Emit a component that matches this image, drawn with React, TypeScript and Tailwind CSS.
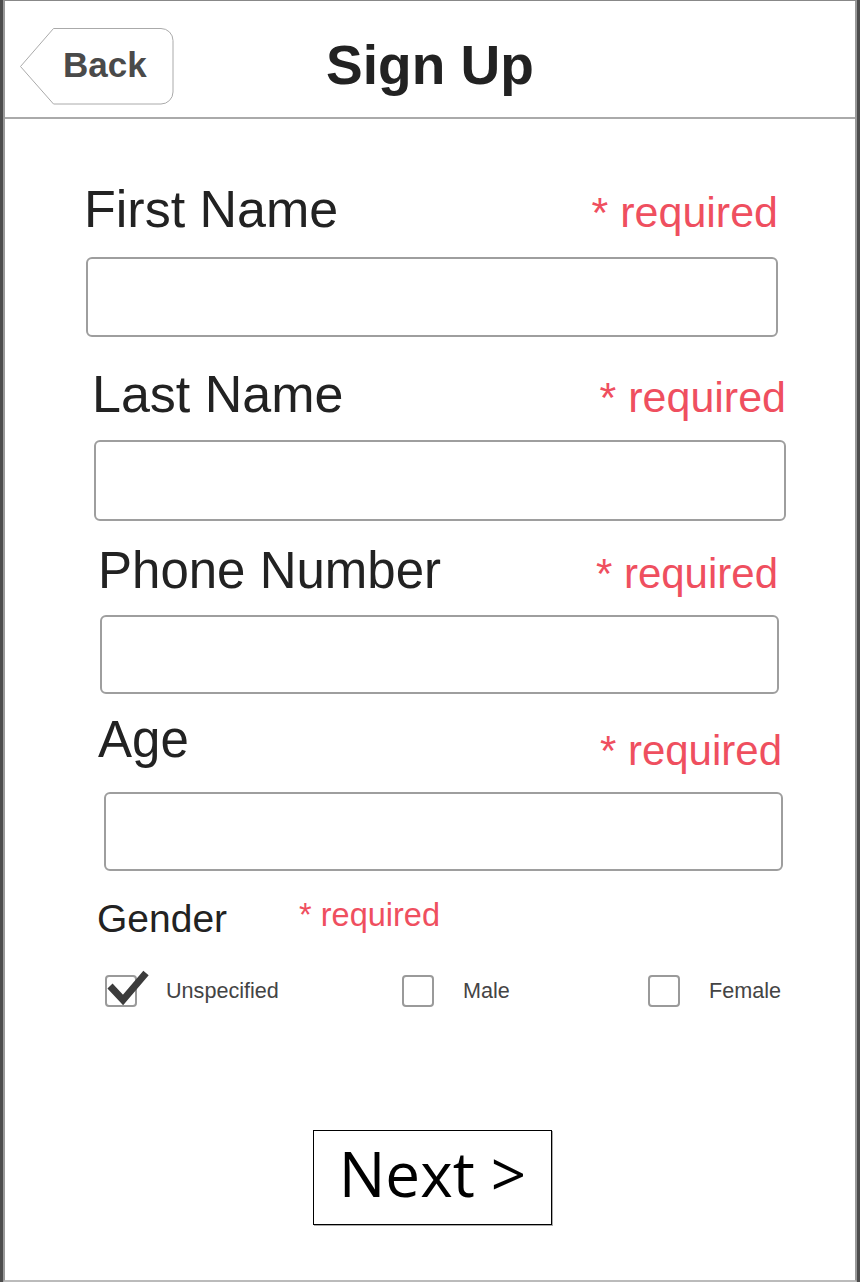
import React from "react";

const sans = { fontFamily: '"Liberation Sans", Arial, sans-serif' };

interface Field {
  label: string;
  labelSize: string;
  reqSize: string;
  rowClass: string;
  reqClass: string;
  inputClass: string;
}

const fields: Field[] = [
  {
    label: "First Name",
    labelSize: "text-[52px]",
    reqSize: "text-[43px]",
    rowClass: "mt-[64px] ml-[79px] mr-[77px]",
    reqClass: "",
    inputClass: "mt-[22px] ml-[81px] w-[692px] h-[80px]",
  },
  {
    label: "Last Name",
    labelSize: "text-[52px]",
    reqSize: "text-[43px]",
    rowClass: "mt-[31px] ml-[87px] mr-[69px]",
    reqClass: "",
    inputClass: "mt-[20px] ml-[89px] w-[692px] h-[81px]",
  },
  {
    label: "Phone Number",
    labelSize: "text-[51px]",
    reqSize: "text-[42px]",
    rowClass: "mt-[24px] ml-[93px] mr-[77px]",
    reqClass: "",
    inputClass: "mt-[19px] ml-[95px] w-[679px] h-[79px]",
  },
  {
    label: "Age",
    labelSize: "text-[51px]",
    reqSize: "text-[42px]",
    rowClass: "mt-[20px] ml-[93px] mr-[73px]",
    reqClass: "translate-y-[8px]",
    inputClass: "mt-[27px] ml-[99px] w-[679px] h-[79px]",
  },
];

function BackButton() {
  return (
    <div className="relative w-[154px] h-[77px] ml-[15px] mt-[27px]">
      <svg className="absolute inset-0" width="154" height="77" viewBox="0 0 154 77">
        <path
          d="M33.5 0.5 H141 a12 12 0 0 1 12 12 V64 a12 12 0 0 1 -12 12 H33.5 L0.5 38.5 Z"
          fill="white"
          stroke="#aaaaaa"
          strokeWidth="1"
        />
      </svg>
      <div
        className="relative pl-[43px] pt-[19px] text-[35px] leading-none font-bold text-[#4a4a4a]"
        style={sans}
      >
        Back
      </div>
    </div>
  );
}

function Checkbox({ label, checked, width }: { label: string; checked?: boolean; width?: string }) {
  return (
    <div className={`flex items-center ${width ?? ""}`}>
      <div className="relative w-[32px] h-[32px] shrink-0 rounded-[4px] border-2 border-[#9a9a9a] bg-white">
        {checked && (
          <svg
            className="absolute left-[-2px] top-[-8px]"
            width="46"
            height="40"
            viewBox="0 0 46 40"
          >
            <polyline
              points="5,17 18,31 41,4"
              fill="none"
              stroke="#3c3c3c"
              strokeWidth="7"
              strokeLinejoin="miter"
            />
          </svg>
        )}
      </div>
      <span className="ml-[29px] text-[21.6px] leading-none text-[#444]" style={sans}>
        {label}
      </span>
    </div>
  );
}

export default function App() {
  return (
    <div className="w-[860px] h-[1282px] bg-white border-l-[3px] border-r-[3px] border-[#4d4d4d]">
      <div className="h-full flex flex-col border-l-2 border-r-2 border-[#9a9a9a] border-t border-t-[#888] border-b-2 border-b-[#bbbbbb]">
        {/* Header */}
        <div className="h-[118px] shrink-0 grid grid-cols-[1fr_auto_1fr] items-start border-b-2 border-[#aaaaaa]">
          <div>
            <BackButton />
          </div>
          <h1
            className="mt-[37px] text-[55px] leading-none font-bold text-[#222]"
            style={sans}
          >
            Sign Up
          </h1>
          <div />
        </div>

        {/* Fields */}
        {fields.map((f) => (
          <div key={f.label}>
            <div className={`flex items-baseline justify-between ${f.rowClass}`}>
              <span className={`${f.labelSize} leading-none text-[#222]`} style={sans}>
                {f.label}
              </span>
              <span
                className={`${f.reqSize} leading-none text-[#ef4f5f] ${f.reqClass}`}
                style={sans}
              >
                * required
              </span>
            </div>
            <div
              className={`rounded-[6px] border-2 border-[#9e9e9e] bg-white ${f.inputClass}`}
            />
          </div>
        ))}

        {/* Gender */}
        <div className="mt-[28px] ml-[92px] flex items-baseline">
          <span className="text-[39px] leading-none text-[#222]" style={sans}>
            Gender
          </span>
          <span
            className="ml-[72px] text-[32.5px] leading-none text-[#ef4f5f] -translate-y-[6px]"
            style={sans}
          >
            * required
          </span>
        </div>

        <div className="mt-[37px] ml-[100px] flex items-center">
          <Checkbox label="Unspecified" checked width="w-[297px]" />
          <Checkbox label="Male" width="w-[246px]" />
          <Checkbox label="Female" />
        </div>

        {/* Next */}
        <div className="mt-[123px] ml-[308px] w-[239px] h-[95px] flex items-center justify-center pb-[10px] border border-black shadow-[1px_1px_0_#aaaaaa]">
          <span
            className="text-[62px] leading-none text-black"
            style={{ fontFamily: '"Open Sans", "Noto Sans", sans-serif' }}
          >
            Next &gt;
          </span>
        </div>
      </div>
    </div>
  );
}
